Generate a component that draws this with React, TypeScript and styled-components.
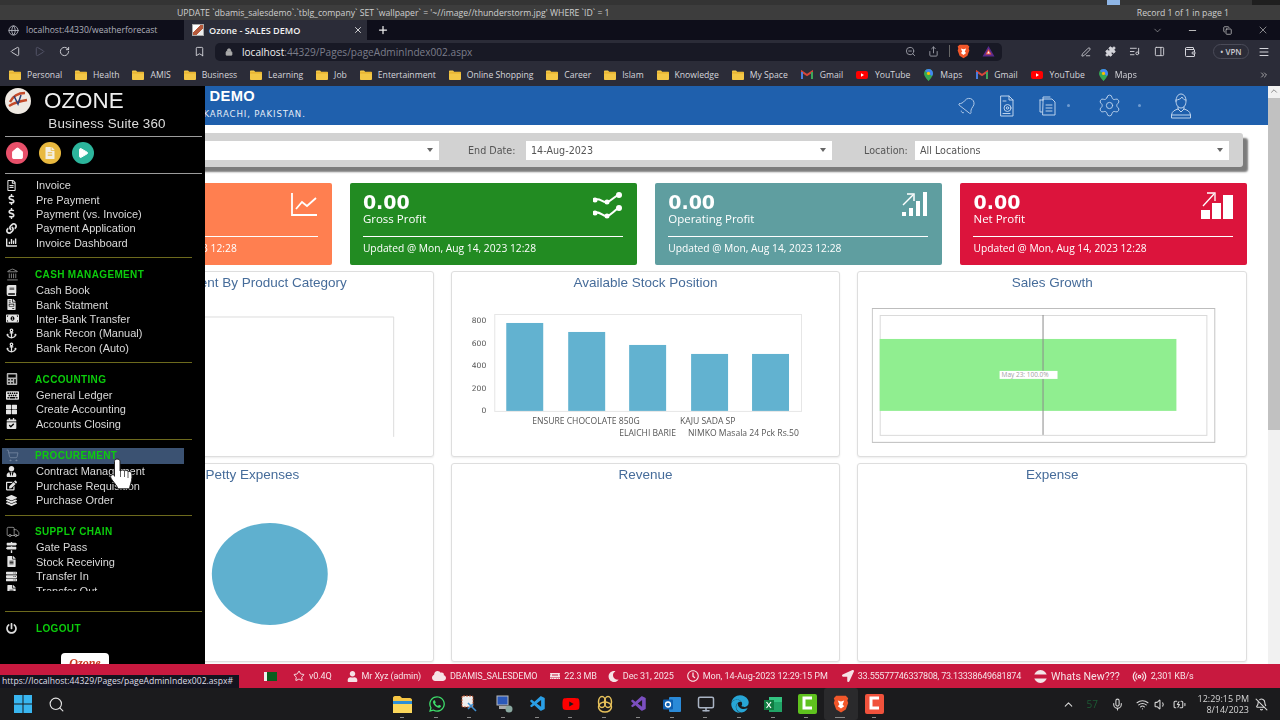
import React from "react";
import styled, { createGlobalStyle } from "styled-components";
import {
  Bell, ChevronDown, Copy, Globe, Landmark, Lock, Menu as MenuIcon,
  Minus, Monitor, Mic, Play, Plus, Puzzle, RotateCw, Search, Settings, Share, ShoppingCart,
  Truck, Volume1, Wallet, Wifi, X, ZoomOut, Bookmark, ChevronUp, BatteryCharging,
  BellOff, Radio, Star, PanelRight, ListMusic, PenLine, ChevronsRight, Home,
} from "lucide-react";
import {
  FaAnchor, FaBook, FaCalculator, FaCalendarCheck, FaChartBar, FaCloud, FaDollarSign, FaEdit, FaEdge,
  FaFileAlt, FaFileInvoice, FaKeyboard, FaLayerGroup, FaLink, FaLocationArrow, FaMapSigns, FaMemory, FaMoneyBillAlt,
  FaMoon, FaPowerOff, FaRegClock, FaRegFileAlt, FaServer, FaThLarge, FaUser, FaUserTie, FaWhatsapp, FaYoutube,
} from "react-icons/fa";
import { VscVscode } from "react-icons/vsc";

const Global = createGlobalStyle`
  html, body { margin: 0; padding: 0; background: #fff; }
  * { box-sizing: border-box; }
`;

const Page = styled.div`
  position: relative; width: 1280px; height: 720px; overflow: hidden; filter: blur(.3px);
  display: flex; flex-direction: column; font-family: "Liberation Sans", Arial, sans-serif;
`;

/* ---- DB tool strip behind the browser ---- */
const TopStrip = styled.div`
  position: relative; height: 20px; background: #3d3d3d; border-top: 5px solid #343434; color: #cfcfcf;
  font: 8.68px "Open Sans", sans-serif; display: flex; align-items: center; padding: 1px 0 0 177px; justify-content: space-between;
`;
const RecordText = styled.span`margin-right: 51px;`;
const StripButton = styled.span`position: absolute; left: 1107px; top: -5px; width: 13px; height: 5px; background: #8fb6e6;`;
const StripEnd = styled.span`position: absolute; right: 0; top: -5px; width: 28px; height: 5px; background: #1f1f1f;`;

/* ---- browser tabs ---- */
const TabBar = styled.div`height: 20px; background: #0e0e1a; display: flex; align-items: stretch; color: #c9c9d0;`;
const Tab = styled.div<{ $active?: boolean }>`
  width: ${p => (p.$active ? 183 : 184)}px; display: flex; align-items: center; gap: ${p => (p.$active ? 5 : 7)}px;
  padding-left: 8px; font: ${p => (p.$active ? "600 9.1px" : "400 8.6px")} "Open Sans", sans-serif;
  background: ${p => (p.$active ? "#2b2c38" : "transparent")};
  color: ${p => (p.$active ? "#f2f2f2" : "#aeb0ba")};
`;
const TabClose = styled.span`margin-left: auto; margin-right: 4px; display: flex;`;
const NewTab = styled.div`display: flex; align-items: center; margin-left: 10px; color: #eee;`;
const WinControls = styled.div`margin-left: auto; display: flex; align-items: center; color: #c8c8c8;`;
const WinButton = styled.div`width: 35px; display: flex; justify-content: center;`;
const Favicon = styled.span`width: 12px; height: 12px; background: linear-gradient(135deg,#fff 0 40%,#b65a3c 40% 70%,#eee 70%); border: 1px solid #aaa; display: block;`;

/* ---- address toolbar ---- */
const Toolbar = styled.div`height: 23px; background: #2b2c38; display: flex; align-items: center; color: #cfd0d6;`;
const NavIcon = styled.div<{ $w?: number; $dim?: boolean }>`
  width: ${p => p.$w ?? 24.5}px; display: flex; justify-content: center; color: ${p => (p.$dim ? "#55566a" : "#d4d4da")};
`;
const NavGroup = styled.div`display: flex; padding-left: 3px; width: 188px;`;
const BookmarkSlot = styled.div`display: flex; margin: 0 10px 0 6px; color: #d4d4da;`;
const AddressBar = styled.div`
  width: 787px; height: 18px; background: #181925; border-radius: 5px;
  display: flex; align-items: center; padding-left: 10px; gap: 9px; font: 10.1px "Open Sans", sans-serif; color: #7c7e8b;
`;
const Host = styled.span`color: #f0f0f0;`;
const AddressRight = styled.div`margin-left: auto; display: flex; align-items: center; gap: 12px; padding-right: 7px; color: #9b9ca6;`;
const Divider = styled.span`width: 1px; height: 12px; margin: 0 -5px 0 -2px; background: #666;`;
const ToolsRight = styled.div`display: flex; align-items: center; margin-left: 72px;`;
const VpnPill = styled.div`
  margin: 0 7px 0 5px; width: 36px; height: 15px; border: 1px solid #4a4b58; border-radius: 8px; font: 600 8px "Open Sans", sans-serif;
  color: #c9cad0; display: flex; align-items: center; justify-content: center; white-space: nowrap;
`;

/* ---- bookmarks ---- */
const Bookmarks = styled.div`
  height: 23px; background: #2b2c38; display: flex; align-items: center; padding-left: 9px; gap: 12.9px;
  font: 8.65px "Open Sans", sans-serif; color: #d6d6dc;
`;
const BookmarkItem = styled.div`display: flex; align-items: center; gap: 6px; white-space: nowrap;`;
const BookmarkGlyph = styled.span<{ $w: number }>`width: ${p => p.$w}px; display: flex; justify-content: center;`;
const BookmarkMore = styled.div`position: absolute; right: 11px; display: flex; color: #bbb;`;

/* ---- main area ---- */
const Main = styled.div`position: relative; height: 578px; display: flex; background: #fff; overflow: hidden;`;
const Content = styled.div`flex: 1; min-width: 0; display: flex; flex-direction: column;`;
const Scrollbar = styled.div`width: 12px; background: #f1f1f1; display: flex; flex-direction: column; align-items: center; color: #777;`;
const ScrollThumb = styled.div`width: 100%; height: 332px; margin-top: 2px; background: #c1c1c1;`;

const Header = styled.header`
  height: 39px; background: #1f60ad; color: #fff; display: flex; align-items: center; justify-content: space-between; padding-left: 154px; flex-shrink: 0;
`;
const HeaderTitle = styled.div`font: 700 14.7px/18px "Liberation Sans", sans-serif; letter-spacing: .4px; margin-top: -5px;`;
const HeaderSub = styled.div`font: 8.6px/10px "DejaVu Sans", sans-serif; letter-spacing: .85px; margin: 4px 0 0 49.5px; color: #e5ecf6;`;
const HeaderIcons = styled.div`display: flex; align-items: center; color: #bcd2ec; margin-right: 77px;`;
const HeaderIcon = styled.div<{ $gap: number }>`display: flex; margin-left: ${p => p.$gap}px;`;
const TiltedIcon = styled(HeaderIcon)`transform: rotate(38deg);`;
const Dot = styled.span<{ $gap: number }>`width: 3px; height: 3px; margin-left: ${p => p.$gap}px; border-radius: 50%; background: #6f9bd0;`;

const Body = styled.div`flex: 1; min-height: 0; padding: 8px 21px 0 44px; display: flex; flex-direction: column; overflow: hidden;`;
const FilterBar = styled.div`
  height: 34px; width: 1199px; background: #d2d2d2; border-radius: 3px; box-shadow: 5px 5px 2px #7b7b7b; flex-shrink: 0;
  display: flex; align-items: center; justify-content: flex-end; padding-right: 14px; font: 9.6px "DejaVu Sans", sans-serif; color: #555;
`;
const FilterLabel = styled.span<{ $left: number; $w: number }>`
  margin-left: ${p => p.$left}px; width: ${p => p.$w}px; flex-shrink: 0; white-space: nowrap;
`;
const Select = styled.div<{ $w: number }>`
  width: ${p => p.$w}px; flex-shrink: 0; height: 19px; background: #fff; color: #555; display: flex; align-items: center; padding: 0 6px 0 5px; justify-content: space-between;
`;
const Caret = styled.span`width: 0; height: 0; border: 3.5px solid transparent; border-top: 4px solid #666; border-bottom: 0;`;

const Cards = styled.div`display: grid; grid-template-columns: repeat(4, 287px); column-gap: 18.3px; margin: 16px 0 0 .6px; flex-shrink: 0;`;
const Card = styled.div<{ $c: string; $pad: number }>`
  height: 82px; background: ${p => p.$c}; border-radius: 2px; color: #fff; padding: 9px 14px 0 ${p => p.$pad}px;
`;
const CardTop = styled.div`display: flex; justify-content: space-between; height: 44px;`;
const CardValue = styled.div`font: 700 19px/21px "DejaVu Sans", sans-serif;`;
const CardLabel = styled.div`font: 11.5px/12px "Open Sans", sans-serif;`;
const CardFoot = styled.div`border-top: 1px solid #fff; padding-top: 5px; font: 10.25px/13px "Open Sans", sans-serif; white-space: nowrap;`;

const Panels = styled.div`display: grid; grid-template-columns: repeat(3, 1fr); grid-template-rows: 186px 199px; gap: 6px 17px; margin-top: 6px;`;
const Panel = styled.section`
  border: 1px solid #dedede; border-radius: 3px; overflow: hidden; background: #fff; box-shadow: 0 1px 2px rgba(0,0,0,.08);
`;
const PanelTitle = styled.h3<{ $left?: number; $right?: number }>`
  margin: 0; height: 23px; padding: 0 ${p => p.$right ?? 0}px 0 ${p => p.$left ?? 0}px; font: 400 13.5px/21px "Liberation Sans", sans-serif; text-align: center; color: #466c9a; white-space: nowrap;
`;
const Chart = styled.svg`display: block; width: 100%;`;

/* ---- sidebar ---- */
const Sidebar = styled.aside`
  position: absolute; left: 0; top: 0; bottom: 0; width: 205px; background: #000; color: #ddd; overflow: hidden; display: flex; flex-direction: column;
`;
const Brand = styled.div`height: 30px; display: flex; align-items: center; padding-left: 5px; gap: 13px; font: 400 22.4px "Liberation Sans", sans-serif; color: #eee; flex-shrink: 0;`;
const BrandSub = styled.div`height: 16px; line-height: 16px; text-align: center; padding-left: 9px; font-size: 13.4px; letter-spacing: .15px; color: #ddd; flex-shrink: 0;`;
const TopRule = styled.hr`margin: 4px 3px 5px 5px; height: 1px; border: 0; background: #9c9c9c; flex-shrink: 0;`;
const LowerRule = styled(TopRule)`margin: 0 3px 0 5px;`;
const QuickRow = styled.div`height: 22px; display: flex; gap: 11px; padding-left: 6px; flex-shrink: 0; margin-bottom: 9px;`;
const Quick = styled.div<{ $c: string }>`
  width: 22px; height: 22px; border-radius: 50%; background: ${p => p.$c}; color: #fff; display: flex; align-items: center; justify-content: center;
`;
const MenuArea = styled.nav`height: 413px; margin-top: 4px; overflow: hidden; flex-shrink: 0;`;
const Item = styled.div`height: 14.4px; display: flex; align-items: center; font-size: 11px; color: #d9d9d9; white-space: nowrap;`;
const ItemIcon = styled.span`width: 36px; padding-left: 6px; display: flex; align-items: center; color: #e4e4e4;`;
const SectionRule = styled.hr`margin: 7.5px 13px 8px 5px; height: 1px; border: 0; background: #6d6a1d;`;
const SectionTitle = styled.div<{ $active?: boolean }>`
  height: 16px; display: flex; align-items: center; font: 700 10px "Liberation Sans", sans-serif; letter-spacing: .35px; color: #0ccc0c;
  margin: 0 21px .5px 2px; background: ${p => (p.$active ? "#3b5272" : "transparent")}; white-space: nowrap;
`;
const TitleIcon = styled.span<{ $active?: boolean }>`width: 33px; padding-left: 4px; display: flex; color: ${p => (p.$active ? "#7d8ea6" : "#b5b5b5")};`;
const LogoutRule = styled.hr`margin: 20px 3px 8px 5px; height: 1px; border: 0; background: #6d6a1d; flex-shrink: 0;`;
const Logout = styled.div`height: 16px; display: flex; align-items: center; font: 700 10px "Liberation Sans", sans-serif; letter-spacing: .35px; color: #0ccc0c; padding-left: 6px; gap: 19px; flex-shrink: 0;`;
const FootLogo = styled.div`
  width: 48px; height: 30px; margin: 17px 0 0 61px; background: #fff; border-radius: 4px 4px 0 0; color: #c8391f; font: italic 700 12px/20px "Liberation Serif", serif; text-align: center; flex-shrink: 0;
`;
const Cursor = styled.div`position: absolute; left: 108px; top: 371px; display: flex;`;

/* ---- status + taskbar ---- */
const StatusBar = styled.footer`
  height: 24px; background: #c8193f; color: #f6e2e6; display: flex; align-items: center; padding: 0 0 0 264px; font: 9.05px "Roboto", sans-serif; letter-spacing: -.12px; white-space: nowrap; flex-shrink: 0;
`;
const StatusItem = styled.div<{ $gap?: number }>`display: flex; align-items: center; gap: 4px; margin-right: ${p => p.$gap ?? 13}px;`;
const NewsText = styled.span`font-size: 10.6px; letter-spacing: 0;`;
const TightText = styled.span`letter-spacing: -.23px;`;
const LooseText = styled.span`letter-spacing: -.05px;`;
const Flag = styled.span`width: 13px; height: 9px; background: linear-gradient(90deg,#eee 0 25%,#0b5d1e 25%); display: block;`;
const UrlTip = styled.div`
  position: absolute; left: 0; top: 675px; width: 239px; height: 13px; background: #14141f; color: #dfdfe6; font: 8.6px/13px "Open Sans", sans-serif; padding-left: 2px; white-space: nowrap;
`;
const Taskbar = styled.div`height: 32px; background: #1b1b1d; display: flex; align-items: center; color: #e4e4e4; flex-shrink: 0;`;
const TaskLeft = styled.div`width: 386px; display: flex; align-items: center; padding-left: 14px; gap: 16px; flex-shrink: 0;`;
const TaskIcons = styled.div`display: flex;`;
const TaskCell = styled.div<{ $active?: boolean }>`
  position: relative; width: 33.7px; height: 32px; display: flex; align-items: center; justify-content: center;
  ${p => p.$active && "background: #2a2a2c; border-radius: 3px;"}
  &::after { content: ""; position: absolute; bottom: 2px; left: 14px; width: ${p => (p.$active ? 10 : 4)}px; height: 1.5px; margin-left: ${p => (p.$active ? -3 : 0)}px; background: #888; }
`;
const Tray = styled.div`margin-left: auto; display: flex; align-items: center; gap: 12px; padding-right: 12px; color: #d5d5d5;`;
const TrayNet = styled.div`display: flex; align-items: center; gap: 5.5px;`;
const TrayNum = styled.span`width: 12px; font: 10px "Open Sans", sans-serif; color: #1d5a34;`;
const Clock = styled.div`font: 9px/11px "Open Sans", sans-serif; text-align: right; margin-right: -6px;`;

/* ---- drawn icons ---- */
const FolderIco = () => (
  <svg width="12" height="10" viewBox="0 0 12 10"><path d="M0 1.5C0 .8.5.5 1 .5h3l1.2 1.3H11c.6 0 1 .4 1 1V9c0 .5-.4 1-1 1H1c-.6 0-1-.5-1-1z" fill="#f3c746" /><rect y="2.4" width="12" height="1" fill="#e2ab2a" /></svg>
);
const GmailIco = () => (
  <svg width="12" height="10" viewBox="0 0 12 10"><path d="M0 9V1l6 4 6-4v8" fill="none" stroke="#d6453a" strokeWidth="2" /><path d="M1 9V2" stroke="#4a7ee0" strokeWidth="2" /><path d="M11 9V2" stroke="#3da65a" strokeWidth="2" /></svg>
);
const YtIco = () => (
  <svg width="12" height="10" viewBox="0 0 12 10"><rect y="1" width="12" height="8" rx="2" fill="#f00" /><path d="M5 3.2 8 5 5 6.8z" fill="#fff" /></svg>
);
const MapsIco = () => (
  <svg width="9" height="12" viewBox="0 0 9 12"><path d="M4.5 0C2 0 0 2 0 4.4 0 7.6 4.5 12 4.5 12S9 7.600 9 4.400C9 2 7 0 4.500 0z" fill="#35a853" /><path d="M1 2 8 7C8.600 6 9 5.200 9 4.400 9 2 7 0 4.500 0 3 0 1.800.8 1 2z" fill="#4285f4" /><circle cx="4.500" cy="4.400" r="1.600" fill="#fbbc05" /></svg>
);
const BraveIco = ({ s = 13 }: { s?: number }) => (
  <svg width={s} height={s * 1.1} viewBox="0 0 20 22"><path d="M4 1h12l3 3-1 3 1 3-3 8-6 4-6-4-3-8 1-3-1-3z" fill="#f1572a" /><path d="M6 7l4 1 4-1-2 5 2 2-4 3-4-3 2-2z" fill="#fff" /></svg>
);
const BatIco = () => (
  <svg width="13" height="12" viewBox="0 0 13 12"><path d="M6.500 1 12.500 11.500H.5z" fill="#5a2a8c" /><path d="M6.500 4 9.500 9.500h-6z" fill="#f2553d" /><path d="M6.500 6 7.800 8.500H5.200z" fill="#fff" /></svg>
);
const WinLogo = () => (
  <svg width="18" height="18" viewBox="0 0 18 18" fill="#39b6f0"><rect width="8.500" height="8.500" /><rect x="9.500" width="8.500" height="8.500" /><rect y="9.500" width="8.500" height="8.500" /><rect x="9.500" y="9.500" width="8.500" height="8.500" /></svg>
);
const FolderBig = () => (
  <svg width="19" height="17" viewBox="0 0 19 17"><path d="M0 2c0-1 .7-2 2-2h5l2 2h8c1 0 2 1 2 2v11c0 1-1 2-2 2H2c-1 0-2-1-2-2z" fill="#f6c644" /><rect y="5" width="19" height="4" fill="#2d8fd8" /><rect y="8" width="19" height="9" fill="#fbd75b" /></svg>
);
const Rings = () => (
  <svg width="18" height="18" viewBox="0 0 18 18" fill="none" stroke="#e8c25b" strokeWidth="1.500"><ellipse cx="6" cy="7" rx="3.500" ry="5.500" /><ellipse cx="12" cy="7" rx="3.500" ry="5.500" /><ellipse cx="9" cy="12" rx="6.500" ry="5" /></svg>
);
const Outlook = () => (
  <svg width="18" height="17" viewBox="0 0 18 17"><rect x="6" y="1" width="12" height="15" rx="1" fill="#2a8ad8" /><rect y="3.500" width="10" height="10" rx="1" fill="#0f5fb0" /><circle cx="5" cy="8.500" r="2.500" fill="none" stroke="#fff" strokeWidth="1.300" /></svg>
);
const Excel = () => (
  <svg width="18" height="17" viewBox="0 0 18 17"><rect x="5" y="1" width="13" height="15" fill="#21a366" /><rect x="5" y="1" width="13" height="5" fill="#33c481" /><rect y="4" width="10" height="10" fill="#107c41" /><path d="M2.500 6 7 12M7 6 2.500 12" stroke="#fff" strokeWidth="1.200" /></svg>
);
const Camtasia = ({ c }: { c: string }) => (
  <svg width="19" height="20" viewBox="0 0 19 20"><rect width="19" height="20" rx="2" fill={c} /><path d="M14 4H6v10h8" fill="none" stroke="#fff" strokeWidth="3" /></svg>
);
const Snip = () => (
  <svg width="18" height="18" viewBox="0 0 18 18"><rect x="1" y="1" width="11" height="11" rx="1" fill="#eee" stroke="#c9552f" strokeDasharray="2 1" /><path d="M7 8l8 8M7 14l5-5" stroke="#3f8fd0" strokeWidth="1.600" /></svg>
);
const NetPc = () => (
  <svg width="18" height="18" viewBox="0 0 18 18"><rect x="2" y="1" width="11" height="9" fill="#2b58b8" stroke="#bbb" /><rect x="4" y="11" width="11" height="3" fill="#aaa" /><circle cx="14" cy="14" r="3.500" fill="#8aa8a0" /></svg>
);
const BrandLogo = () => (
  <svg width="26" height="26" viewBox="0 0 26 26"><circle cx="13" cy="13" r="13" fill="#efe9e2" /><path d="M5 14c3-6 8-9 15-9M4 18c5-3 11-5 18-6" stroke="#c44a2a" strokeWidth="2.500" fill="none" /><path d="M9 8l4 8 3-9" stroke="#2b3f77" strokeWidth="1.500" fill="none" /></svg>
);
const NewBadge = () => (
  <svg width="13" height="13" viewBox="0 0 13 13"><circle cx="6.500" cy="6.500" r="6.500" fill="#f3e6e8" /><rect y="4.500" width="13" height="4" fill="#c8193f" /></svg>
);
const HandCursor = () => (
  <svg width="28" height="35" viewBox="0 0 28 35"><path d="M9 2c1.800 0 3 1 3 2.700V14l1-.2c.5-1 3-1 3.500.2 1-.8 3-.6 3.500.6 1-.5 3-.3 3.500 1.200.8 2 .6 7-.8 11-.7 2.200-1.200 4-1.200 5H10c-.5-2-3-5-6-9-1.500-2-2-4 0-5 1.500-.8 2.500.5 2.500 1.500V4.700C6.500 3 7.500 2 9 2z" fill="#fff" stroke="#222" strokeWidth="1" /><path d="M12.500 14v6M16.500 14v6M20 15v6" stroke="#333" strokeWidth=".8" /></svg>
);

/* header line icons */
const lineIcon = { fill: "none", stroke: "currentColor", strokeWidth: 1, strokeLinecap: "round" as const, strokeLinejoin: "round" as const };
const DocIco = () => (
  <svg width="14" height="22" viewBox="0 0 14 22" {...lineIcon}>
    <path d="M1 1h8l4 4v16H1z" /><path d="M9 1v4h4" /><circle cx="7.500" cy="13" r="3.500" /><circle cx="7.500" cy="13" r="1.200" /><path d="M3 6h3M3 18.500h7" />
  </svg>
);
const FilesIco = () => (
  <svg width="17" height="20" viewBox="0 0 17 20" {...lineIcon}>
    <path d="M4 4V1h7M1 4v12h2" /><path d="M1 4h3" /><path d="M4 6V3h9l3 3v13H4z" /><path d="M7 9h6M7 12h6M7 15h6" />
  </svg>
);
const UserIco = () => (
  <svg width="20" height="26" viewBox="0 0 20 26" {...lineIcon}>
    <path d="M5 8c0-4 2-7 5-7s5 3 5 7c0 4-2 7-5 7s-5-3-5-7z" /><path d="M5 7c2 0 5-1 6-3 1 2 2 3 4 3" />
    <path d="M7 14v2l3 3 3-3v-2" /><path d="M7 16c-3 1-6 2-6.500 6v3h19v-3c-.5-4-3.500-5-6.500-6" /><path d="M.5 22h19" />
  </svg>
);

const ChartIco1 = () => (
  <svg width="27" height="25" viewBox="0 0 27 25" fill="none" stroke="#fff" strokeWidth="1.800"><path d="M1 1v22h25" /><path d="M5 17l6-7 5 4 9-8" /></svg>
);
const ChartIco2 = () => (
  <svg width="30" height="28" viewBox="0 0 30 28" fill="none" stroke="#fff" strokeWidth="2"><path d="M1 8c6-3 8 3 13 2s7-6 12-7" /><path d="M1 21c6-3 8 4 13 3s7-6 12-8" /><g fill="#fff" stroke="none"><circle cx="26" cy="3" r="3" /><circle cx="14" cy="10" r="2.500" /><circle cx="2" cy="8" r="2.500" /><circle cx="26" cy="16" r="3" /><circle cx="14" cy="24" r="2.500" /><circle cx="2" cy="21" r="2.500" /></g></svg>
);
const ChartIco3 = () => (
  <svg width="26" height="25" viewBox="0 0 26 25" fill="#fff"><rect y="20" width="4" height="4" /><rect x="7" y="16" width="4" height="8" /><rect x="14" y="9" width="4" height="15" /><rect x="21" y="0" width="4" height="24" /><path d="M1 13 11 3" stroke="#fff" strokeWidth="1.500" /><path d="M5 2h7v7" stroke="#fff" strokeWidth="1.500" fill="none" /></svg>
);
const ChartIco4 = () => (
  <svg width="32" height="28" viewBox="0 0 32 28" fill="#fff"><rect y="18" width="9" height="9" /><rect x="11" y="11" width="9" height="16" /><rect x="22" y="3" width="10" height="24" /><path d="M2 14 13 2" stroke="#fff" strokeWidth="1.300" /><path d="M6 1h8v8" stroke="#fff" strokeWidth="1.300" fill="none" /></svg>
);

/* ---- data ---- */
const bookmarks: [string, React.ReactNode, number][] = [
  ["Personal", <FolderIco />, 12], ["Health", <FolderIco />, 12], ["AMIS", <FolderIco />, 12], ["Business", <FolderIco />, 12],
  ["Learning", <FolderIco />, 12], ["Job", <FolderIco />, 12], ["Entertainment", <FolderIco />, 12], ["Online Shopping", <FolderIco />, 12],
  ["Career", <FolderIco />, 12], ["Islam", <FolderIco />, 12], ["Knowledge", <FolderIco />, 12], ["My Space", <FolderIco />, 12],
  ["Gmail", <GmailIco />, 13], ["YouTube", <YtIco />, 13], ["Maps", <MapsIco />, 11], ["Gmail", <GmailIco />, 13], ["YouTube", <YtIco />, 13], ["Maps", <MapsIco />, 11],
];

type Row = [string, React.ReactNode];
const ic = { size: 11 };
const firstGroup: Row[] = [
  ["Invoice", <FaRegFileAlt {...ic} />], ["Pre Payment", <FaDollarSign {...ic} />], ["Payment (vs. Invoice)", <FaDollarSign {...ic} />],
  ["Payment Application", <FaLink {...ic} />], ["Invoice Dashboard", <FaChartBar {...ic} />],
];
const sections: { title: string; icon: React.ReactNode; active?: boolean; rows: Row[] }[] = [
  { title: "CASH MANAGEMENT", icon: <Landmark size={13} strokeWidth={1.3} />, rows: [
    ["Cash Book", <FaBook {...ic} />], ["Bank Statment", <FaFileInvoice {...ic} />], ["Inter-Bank Transfer", <FaMoneyBillAlt size={13} />],
    ["Bank Recon (Manual)", <FaAnchor {...ic} />], ["Bank Recon (Auto)", <FaAnchor {...ic} />],
  ] },
  { title: "ACCOUNTING", icon: <FaCalculator size={12} />, rows: [
    ["General Ledger", <FaKeyboard size={13} />], ["Create Accounting", <FaThLarge {...ic} />], ["Accounts Closing", <FaCalendarCheck {...ic} />],
  ] },
  { title: "PROCUREMENT", active: true, icon: <ShoppingCart size={13} strokeWidth={1.3} />, rows: [
    ["Contract Management", <FaUserTie {...ic} />], ["Purchase Requisition", <FaEdit {...ic} />], ["Purchase Order", <FaLayerGroup {...ic} />],
  ] },
  { title: "SUPPLY CHAIN", icon: <Truck size={14} strokeWidth={1.2} />, rows: [
    ["Gate Pass", <FaMapSigns {...ic} />], ["Stock Receiving", <FaFileAlt {...ic} />], ["Transfer In", <FaServer {...ic} />], ["Transfer Out", <FaFileAlt {...ic} />],
  ] },
];

const kpis = [
  { c: "#ff7f50", label: "Sales", icon: <ChartIco1 />, pad: 19 },
  { c: "#228b22", label: "Gross Profit", icon: <ChartIco2 />, pad: 13 },
  { c: "#5f9ea0", label: "Operating Profit", icon: <ChartIco3 />, pad: 13 },
  { c: "#dc143c", label: "Net Profit", icon: <ChartIco4 />, pad: 13 },
];

const bars: [number, number][] = [[506, 323], [568, 332], [629, 345], [691, 354], [752, 354]];
const yTicks: [string, number][] = [["800", 323], ["600", 346], ["400", 368], ["200", 391], ["0", 413]];
const axisFont = { fontFamily: "Open Sans, sans-serif", fontSize: 8.6, fill: "#555" };

export default function App() {
  return (
    <Page>
      <Global />
      <TopStrip>
        <StripButton />
        <StripEnd />
        <span>UPDATE `dbamis_salesdemo`.`tblg_company` SET `wallpaper` = '~//image//thunderstorm.jpg' WHERE `ID` = 1</span>
        <RecordText>Record 1 of 1 in page 1</RecordText>
      </TopStrip>
      <TabBar>
        <Tab><Globe size={11} />localhost:44330/weatherforecast</Tab>
        <Tab $active><Favicon />Ozone - SALES DEMO<TabClose><X size={10} /></TabClose></Tab>
        <NewTab><Plus size={12} strokeWidth={2.5} /></NewTab>
        <WinControls>
          <WinButton><ChevronDown size={11} strokeWidth={1.2} /></WinButton>
          <WinButton><Minus size={11} /></WinButton>
          <WinButton><Copy size={9} /></WinButton>
          <WinButton><X size={12} strokeWidth={1.3} /></WinButton>
        </WinControls>
      </TabBar>
      <Toolbar>
        <NavGroup>
          <NavIcon><Play size={11} style={{ transform: "rotate(180deg)" }} /></NavIcon>
          <NavIcon $dim><Play size={11} /></NavIcon>
          <NavIcon><RotateCw size={11} /></NavIcon>
        </NavGroup>
        <BookmarkSlot><Bookmark size={11} /></BookmarkSlot>
        <AddressBar>
          <Lock size={8} color="#aaa" fill="#aaa" />
          <span><Host>localhost</Host>:44329/Pages/pageAdminIndex002.aspx</span>
          <AddressRight>
            <ZoomOut size={11} /><Share size={11} /><Divider /><BraveIco /><BatIco />
          </AddressRight>
        </AddressBar>
        <ToolsRight>
          <NavIcon $w={24}><PenLine size={10} /></NavIcon>
          <NavIcon $w={24}><Puzzle size={11} fill="#d4d4da" /></NavIcon>
          <NavIcon $w={25}><ListMusic size={11} /></NavIcon>
          <NavIcon $w={25}><PanelRight size={11} /></NavIcon>
          <NavIcon $w={36}><Wallet size={12} /></NavIcon>
          <VpnPill>• VPN</VpnPill>
          <NavIcon $w={16}><MenuIcon size={12} /></NavIcon>
        </ToolsRight>
      </Toolbar>
      <Bookmarks>
        {bookmarks.map(([t, i, w], n) => <BookmarkItem key={n}><BookmarkGlyph $w={w}>{i}</BookmarkGlyph>{t}</BookmarkItem>)}
        <BookmarkMore><ChevronsRight size={10} /></BookmarkMore>
      </Bookmarks>

      <Main>
        <Content>
          <Header>
            <div>
              <HeaderTitle>SALES DEMO</HeaderTitle>
              <HeaderSub>KARACHI, PAKISTAN.</HeaderSub>
            </div>
            <HeaderIcons>
              <TiltedIcon $gap={0}><Bell size={20} strokeWidth={1} /></TiltedIcon>
              <HeaderIcon $gap={23}><DocIco /></HeaderIcon>
              <HeaderIcon $gap={25}><FilesIco /></HeaderIcon>
              <Dot $gap={11} />
              <HeaderIcon $gap={27}><Settings size={25} strokeWidth={.9} /></HeaderIcon>
              <Dot $gap={16} />
              <HeaderIcon $gap={30}><UserIco /></HeaderIcon>
            </HeaderIcons>
          </Header>
          <Body>
            <FilterBar>
              <FilterLabel $left={0} $w={58}>Start Date:</FilterLabel>
              <Select $w={306}><span /><Caret /></Select>
              <FilterLabel $left={29} $w={58}>End Date:</FilterLabel>
              <Select $w={306}>14-Aug-2023<Caret /></Select>
              <FilterLabel $left={32} $w={51}>Location:</FilterLabel>
              <Select $w={314}>All Locations<Caret /></Select>
            </FilterBar>
            <Cards>
              {kpis.map(k => (
                <Card $c={k.c} $pad={k.pad} key={k.label}>
                  <CardTop>
                    <div>
                      <CardValue>0.00</CardValue>
                      <CardLabel>{k.label}</CardLabel>
                    </div>
                    {k.icon}
                  </CardTop>
                  <CardFoot>Updated @ Mon, Aug 14, 2023 12:28</CardFoot>
                </Card>
              ))}
            </Cards>
            <Panels>
              <Panel>
                <PanelTitle $right={4}>Sales Segment By Product Category</PanelTitle>
                <Chart viewBox="45 295 388 160">
                  <path d="M60 317H394V437" fill="none" stroke="#dcdcdc" />
                </Chart>
              </Panel>
              <Panel>
                <PanelTitle>Available Stock Position</PanelTitle>
                <Chart viewBox="451.700 295 388 160">
                  <rect x="494.500" y="314.500" width="307" height="97" fill="none" stroke="#e6e6e6" />
                  {bars.map(([x, y]) => <rect key={x} x={x} y={y} width="37" height={411 - y} fill="#62b2d0" />)}
                  {yTicks.map(([t, y]) => <text key={t} x="486" y={y} textAnchor="end" fill="#555" fontFamily="DejaVu Sans, sans-serif" fontSize="7.600">{t}</text>)}
                  <text x="532" y="424.500" {...axisFont}>ENSURE CHOCOLATE 850G</text>
                  <text x="680" y="424.500" {...axisFont}>KAJU SADA SP</text>
                  <text x="619" y="436.500" {...axisFont}>ELAICHI BARIE</text>
                  <text x="688" y="436.500" {...axisFont}>NIMKO Masala 24 Pck Rs.50</text>
                </Chart>
              </Panel>
              <Panel>
                <PanelTitle>Sales Growth</PanelTitle>
                <Chart viewBox="858.300 295 388 160">
                  <rect x="872.500" y="308.500" width="343" height="134" fill="#fff" stroke="#bdbdbd" />
                  <rect x="880.500" y="315.500" width="327" height="120" fill="#fff" stroke="#dadada" />
                  <rect x="880" y="339" width="297" height="72" fill="#90ee90" />
                  <path d="M1043.500 315V435" stroke="#8a8a8a" />
                  <rect x="1000" y="371" width="58" height="8" fill="#fff" />
                  <text x="1002" y="377.500" fontFamily="Open Sans, sans-serif" fontSize="6.500" fill="#a2a2a2">May 23: 100.0%</text>
                </Chart>
              </Panel>
              <Panel>
                <PanelTitle $left={27}>Petty Expenses</PanelTitle>
                <Chart viewBox="45 487 388 175">
                  <ellipse cx="270" cy="574" rx="58" ry="51" fill="#5fb0cf" />
                </Chart>
              </Panel>
              <Panel><PanelTitle>Revenue</PanelTitle></Panel>
              <Panel><PanelTitle>Expense</PanelTitle></Panel>
            </Panels>
          </Body>
        </Content>
        <Scrollbar>
          <ChevronUp size={10} />
          <ScrollThumb />
        </Scrollbar>

        <Sidebar>
          <Brand><BrandLogo />OZONE</Brand>
          <BrandSub>Business Suite 360</BrandSub>
          <TopRule />
          <QuickRow>
            <Quick $c="#e8506a"><Home size={13} fill="#fff" /></Quick>
            <Quick $c="#e9b93f"><FaFileAlt size={12} color="#f4efe2" /></Quick>
            <Quick $c="#2cb59c"><Play size={12} fill="#fff" /></Quick>
          </QuickRow>
          <LowerRule />
          <MenuArea>
            {firstGroup.map(([t, i]) => <Item key={t}><ItemIcon>{i}</ItemIcon>{t}</Item>)}
            {sections.map(s => (
              <div key={s.title}>
                <SectionRule />
                <SectionTitle $active={s.active}><TitleIcon $active={s.active}>{s.icon}</TitleIcon>{s.title}</SectionTitle>
                {s.rows.map(([t, i]) => <Item key={t}><ItemIcon>{i}</ItemIcon>{t}</Item>)}
              </div>
            ))}
          </MenuArea>
          <LogoutRule />
          <Logout><FaPowerOff size={11} color="#ddd" />LOGOUT</Logout>
          <FootLogo>Ozone</FootLogo>
        </Sidebar>
        <Cursor><HandCursor /></Cursor>
      </Main>

      <StatusBar>
        <StatusItem $gap={16}><Flag /></StatusItem>
        <StatusItem $gap={15}><Star size={12} />v0.4Q</StatusItem>
        <StatusItem $gap={11}><FaUser size={11} />Mr Xyz (admin)</StatusItem>
        <StatusItem $gap={13}><FaCloud size={14} />DBAMIS_SALESDEMO</StatusItem>
        <StatusItem $gap={11}><FaMemory size={10} />22.3 MB</StatusItem>
        <StatusItem><FaMoon size={11} />Dec 31, 2025</StatusItem>
        <StatusItem $gap={14}><FaRegClock size={12} /><LooseText>Mon, 14-Aug-2023 12:29:15 PM</LooseText></StatusItem>
        <StatusItem><FaLocationArrow size={12} /><TightText>33.55577746337808, 73.13338649681874</TightText></StatusItem>
        <StatusItem $gap={12}><NewBadge /><NewsText>Whats New???</NewsText></StatusItem>
        <StatusItem><Radio size={15} />2,301 KB/s</StatusItem>
      </StatusBar>
      <Taskbar>
        <TaskLeft><WinLogo /><Search size={17} strokeWidth={1.6} /></TaskLeft>
        <TaskIcons>
          <TaskCell><FolderBig /></TaskCell>
          <TaskCell><FaWhatsapp size={18} color="#3ddc6a" /></TaskCell>
          <TaskCell><Snip /></TaskCell>
          <TaskCell><NetPc /></TaskCell>
          <TaskCell><VscVscode size={18} color="#2a9fe6" /></TaskCell>
          <TaskCell><FaYoutube size={18} color="#f00" /></TaskCell>
          <TaskCell><Rings /></TaskCell>
          <TaskCell><VscVscode size={18} color="#7b4fc0" /></TaskCell>
          <TaskCell><Outlook /></TaskCell>
          <TaskCell><Monitor size={18} color="#aab4c4" /></TaskCell>
          <TaskCell><FaEdge size={18} color="#27a6d6" /></TaskCell>
          <TaskCell><Excel /></TaskCell>
          <TaskCell><Camtasia c="#5fc21e" /></TaskCell>
          <TaskCell $active><BraveIco s={16} /></TaskCell>
          <TaskCell><Camtasia c="#f0523c" /></TaskCell>
        </TaskIcons>
        <Tray>
          <ChevronUp size={13} />
          <TrayNum>57</TrayNum>
          <Mic size={13} />
          <TrayNet>
            <Wifi size={13} />
            <Volume1 size={13} />
            <BatteryCharging size={13} />
          </TrayNet>
          <Clock>12:29:15 PM<br />8/14/2023</Clock>
          <BellOff size={13} />
        </Tray>
      </Taskbar>
      <UrlTip>https://localhost:44329/Pages/pageAdminIndex002.aspx#</UrlTip>
    </Page>
  );
}
